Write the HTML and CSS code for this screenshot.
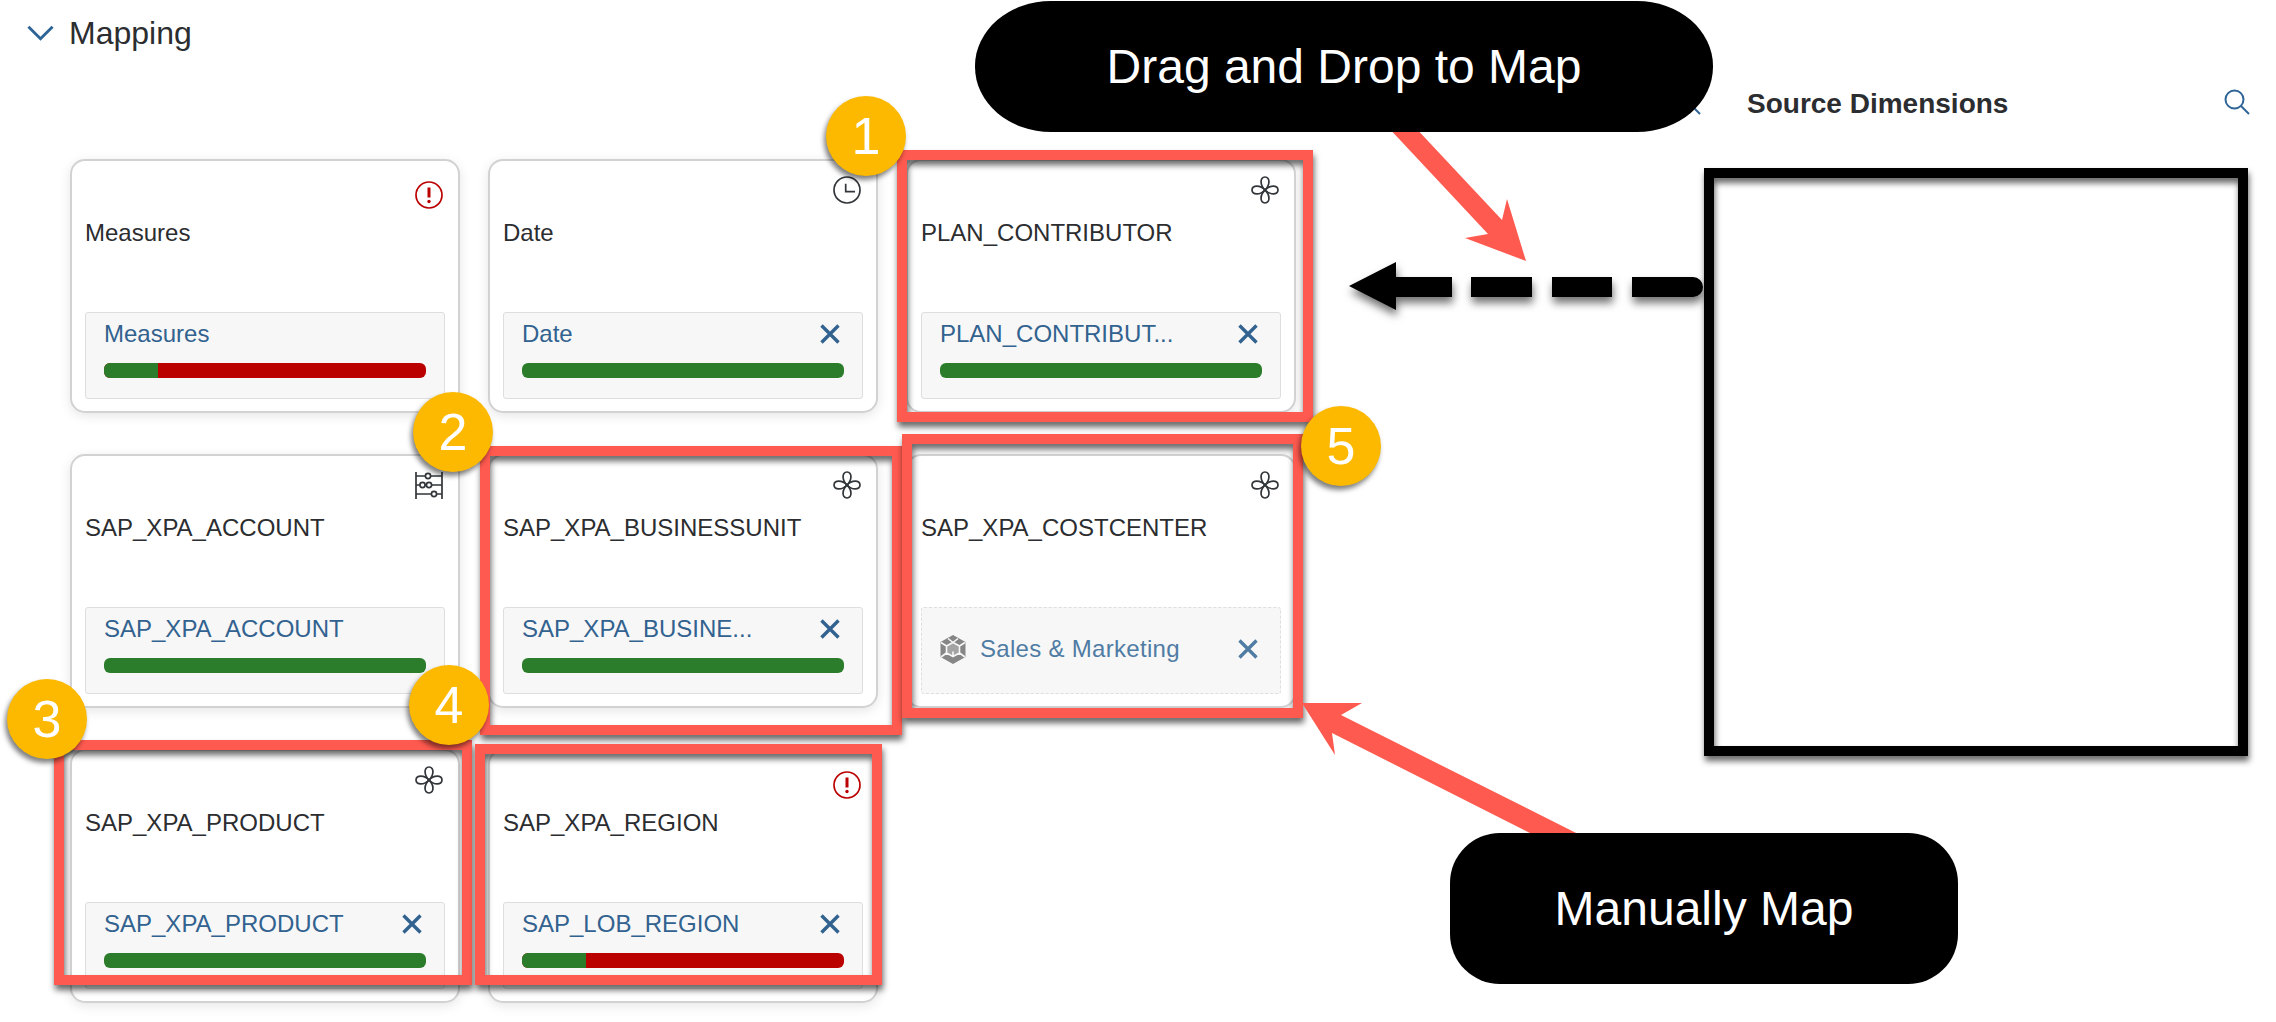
FILE: index.html
```html
<!DOCTYPE html>
<html>
<head>
    <meta charset="UTF-8">
    <title>Mapping</title>
    <link rel="stylesheet" href="styles.css">
</head>
<body>
    <div class="page">
        <!-- Mapping section -->
        <div class="mapping">
            <div class="section-head">
                <svg class="chevron" viewBox="0 0 28 16"><path d="M1.5 1.5 14 14 26.5 1.5" /></svg>
                <span>Mapping</span>
            </div>
            <div class="card-grid">
                <div class="card">
                    <div class="card-icon"><svg viewBox="0 0 28 28" class="ico-error"><circle cx="14" cy="14" r="13" /><path d="M14 6.5V16.5" class="ex" /><circle cx="14" cy="20.5" r="1.7" class="dot" /></svg></div>
                    <div class="card-title">Measures</div>
                    <div class="slot">
                        <div class="slot-row"><span class="slot-label">Measures</span></div>
                        <div class="bar"><div class="bar-green" style="width: 16.8%"></div></div>
                    </div>
                </div>
                <div class="card">
                    <div class="card-icon"><svg viewBox="0 0 28 28" class="ico-line"><circle cx="14" cy="14" r="13" /><path d="M12.7 7.7V15.7H22" /></svg></div>
                    <div class="card-title">Date</div>
                    <div class="slot">
                        <div class="slot-row"><span class="slot-label">Date</span><svg class="close" viewBox="0 0 20 20"><path d="M1.5 1.5 18.5 18.5M18.5 1.5 1.5 18.5" /></svg></div>
                        <div class="bar"><div class="bar-green" style="width: 100%"></div></div>
                    </div>
                </div>
                <div class="card">
                    <div class="card-icon"><svg viewBox="0 0 28 28" class="ico-line"><use href="#flower" /></svg></div>
                    <div class="card-title">PLAN_CONTRIBUTOR</div>
                    <div class="slot">
                        <div class="slot-row"><span class="slot-label">PLAN_CONTRIBUT...</span><svg class="close" viewBox="0 0 20 20"><path d="M1.5 1.5 18.5 18.5M18.5 1.5 1.5 18.5" /></svg></div>
                        <div class="bar"><div class="bar-green" style="width: 100%"></div></div>
                    </div>
                </div>
                <div class="card">
                    <div class="card-icon"><svg viewBox="0 0 28 28" class="ico-line"><path d="M1 1V28M27 1V28M1 5H27M1 14H27M1 23H27" /><circle cx="13" cy="5" r="2.6" class="bead" /><circle cx="7.5" cy="14" r="2.6" class="bead" /><circle cx="14" cy="14" r="2.6" class="bead" /><circle cx="19" cy="23" r="2.6" class="bead" /></svg></div>
                    <div class="card-title">SAP_XPA_ACCOUNT</div>
                    <div class="slot">
                        <div class="slot-row"><span class="slot-label">SAP_XPA_ACCOUNT</span></div>
                        <div class="bar"><div class="bar-green" style="width: 100%"></div></div>
                    </div>
                </div>
                <div class="card">
                    <div class="card-icon"><svg viewBox="0 0 28 28" class="ico-line"><use href="#flower" /></svg></div>
                    <div class="card-title">SAP_XPA_BUSINESSUNIT</div>
                    <div class="slot">
                        <div class="slot-row"><span class="slot-label">SAP_XPA_BUSINE...</span><svg class="close" viewBox="0 0 20 20"><path d="M1.5 1.5 18.5 18.5M18.5 1.5 1.5 18.5" /></svg></div>
                        <div class="bar"><div class="bar-green" style="width: 100%"></div></div>
                    </div>
                </div>
                <div class="card">
                    <div class="card-icon"><svg viewBox="0 0 28 28" class="ico-line"><use href="#flower" /></svg></div>
                    <div class="card-title">SAP_XPA_COSTCENTER</div>
                    <div class="slot slot-manual">
                        <svg class="cube" viewBox="0 0 26 29">
                            <polygon points="13,0 25.5,7 25.5,22 13,29 .5,22 .5,7" />
                            <path d="M13 7.5 19.5 11V18L13 21.5 6.5 18V11ZM13 7.5 8 3.5M13 7.5 18 3.5M6.5 18 1 22M19.5 18 25 22M6.5 11 1 7.5M19.5 11 25 7.5M13 21.5V16.5" />
                        </svg>
                        <span class="manual-label">Sales &amp; Marketing</span>
                        <svg class="close close-light" viewBox="0 0 20 20"><path d="M1.5 1.5 18.5 18.5M18.5 1.5 1.5 18.5" /></svg>
                    </div>
                </div>
                <div class="card">
                    <div class="card-icon"><svg viewBox="0 0 28 28" class="ico-line"><use href="#flower" /></svg></div>
                    <div class="card-title">SAP_XPA_PRODUCT</div>
                    <div class="slot">
                        <div class="slot-row"><span class="slot-label">SAP_XPA_PRODUCT</span><svg class="close" viewBox="0 0 20 20"><path d="M1.5 1.5 18.5 18.5M18.5 1.5 1.5 18.5" /></svg></div>
                        <div class="bar"><div class="bar-green" style="width: 100%"></div></div>
                    </div>
                </div>
                <div class="card">
                    <div class="card-icon"><svg viewBox="0 0 28 28" class="ico-error"><circle cx="14" cy="14" r="13" /><path d="M14 6.5V16.5" class="ex" /><circle cx="14" cy="20.5" r="1.7" class="dot" /></svg></div>
                    <div class="card-title">SAP_XPA_REGION</div>
                    <div class="slot">
                        <div class="slot-row"><span class="slot-label">SAP_LOB_REGION</span><svg class="close" viewBox="0 0 20 20"><path d="M1.5 1.5 18.5 18.5M18.5 1.5 1.5 18.5" /></svg></div>
                        <div class="bar"><div class="bar-green" style="width: 19.8%"></div></div>
                    </div>
                </div>
            </div>
        </div>

        <!-- Source panel header -->
        <div class="source">
            <svg class="search" viewBox="0 0 26 26"><circle cx="10.5" cy="10.5" r="9" /><path d="M17 17 25 25" /></svg>
            <span class="source-title">Source Dimensions</span>
            <svg class="search" viewBox="0 0 26 26"><circle cx="10.5" cy="10.5" r="9" /><path d="M17 17 25 25" /></svg>
        </div>
    </div>

    <!-- Flower icon used on the cards -->
    <svg class="defs" width="0" height="0">
        <defs>
            <g id="flower">
                <path d="M14 14C9 9.5 8.5 1 14 1S19 9.5 14 14Z" />
                <path d="M14 14C18.5 9 27 8.5 27 14S18.5 19 14 14Z" />
                <path d="M14 14C19 18.5 19.5 27 14 27S9 18.5 14 14Z" />
                <path d="M14 14C9.5 19 1 19.5 1 14S9.5 9 14 14Z" />
            </g>
        </defs>
    </svg>

    <!-- Annotations drawn on top of the screenshot -->
    <div class="mark mark-1"></div>
    <div class="mark mark-2"></div>
    <div class="mark mark-3"></div>
    <div class="mark mark-4"></div>
    <div class="mark mark-5"></div>
    <div class="drop-box"></div>

    <svg class="arrows" viewBox="0 0 2276 1022">
        <polygon class="red" points="1386,125 1413,125 1502,220 1507,199 1526,261 1465,238 1488,234" />
        <polygon class="red" points="1590,840 1341,715 1362,703 1302,703 1335,755 1332,733 1544,840" />
        <g class="dashed">
            <polygon points="1349,286 1396,262 1396,277 1452,277 1452,297 1396,297 1396,310" />
            <rect x="1471" y="277" width="61" height="20" />
            <rect x="1552" y="277" width="60" height="20" />
            <path d="M1632 277H1693A10 10 0 0 1 1693 297H1632Z" />
        </g>
    </svg>

    <div class="pill pill-drag">Drag and Drop to Map</div>
    <div class="pill pill-manual">Manually Map</div>

    <div class="badge badge-1">1</div>
    <div class="badge badge-2">2</div>
    <div class="badge badge-3">3</div>
    <div class="badge badge-4">4</div>
    <div class="badge badge-5">5</div>
</body>
</html>
```

FILE: styles.css
```css
/* Page */
body {
    margin: 0;
    background-color: #fff;
    font-family: "Liberation Sans", Arial, sans-serif;
    color: #2b2d30;
    overflow: hidden;
}

.page {
    display: flex;
    width: 2276px;
    height: 1022px;
}

.mapping {
    width: 1675px;
}

.section-head {
    display: flex;
    align-items: center;
    gap: 15px;
    height: 38px;
    padding: 14px 0 0 27px;
    font-size: 32px;
    line-height: 38px;
}

.chevron {
    width: 27px;
    height: 16px;
    fill: none;
    stroke: #2f6497;
    stroke-width: 3;
}

/* Cards */
.card-grid {
    display: grid;
    grid-template-columns: repeat(3, 390px);
    grid-auto-rows: 254px;
    gap: 41px 28px;
    margin: 107px 0 0 70px;
}

.card {
    display: flex;
    flex-direction: column;
    box-sizing: border-box;
    padding: 20px 13px 12px;
    border: 2px solid #d2d2d2;
    border-radius: 15px;
    background-color: #fff;
    box-shadow: 0 3px 12px rgba(0, 0, 0, 0.1);
}

.card-icon {
    display: flex;
    justify-content: flex-end;
    height: 28px;
    padding-right: 2px;
}

.card-icon svg {
    width: 28px;
    height: 28px;
    fill: none;
}

.ico-error {
    stroke: #bb0000;
    stroke-width: 1.7;
}

.ico-error .ex {
    stroke-width: 3;
}

.ico-error .dot {
    fill: #bb0000;
    stroke: none;
}

/* These icons sit a little higher than the error icon */
.ico-line {
    margin-top: -5px;
    stroke: #32363a;
    stroke-width: 1.7;
}

.bead {
    fill: #fff;
}

.card-title {
    margin-top: 9px;
    font-size: 24px;
    line-height: 30px;
}

/* Mapped slot at the bottom of a card */
.slot {
    box-sizing: border-box;
    height: 87px;
    margin-top: auto;
    padding: 6px 18px 0;
    border: 1px solid #dedede;
    border-radius: 3px;
    background-color: #f7f7f7;
}

.slot-row {
    display: flex;
    align-items: center;
    justify-content: space-between;
    height: 30px;
}

.slot-label {
    font-size: 24px;
    color: #32628f;
}

.close {
    width: 20px;
    height: 20px;
    margin-right: 4px;
    fill: none;
    stroke: #32628f;
    stroke-width: 3.4;
}

.close-light {
    margin-left: auto;
    stroke: #507ca4;
}

.bar {
    height: 15px;
    margin-top: 14px;
    border-radius: 6px;
    background-color: #bb0000;
    overflow: hidden;
}

.bar-green {
    height: 100%;
    background-color: #2b7d2b;
}

.slot-manual {
    display: flex;
    align-items: center;
    gap: 14px;
    padding-top: 0;
    padding-bottom: 3px;
    border-style: dashed;
}

.cube {
    width: 26px;
    height: 29px;
    fill: #868686;
    stroke: none;
}

.cube path {
    fill: #a4a4a4;
    stroke: #f7f7f7;
    stroke-width: 1.6;
}

.manual-label {
    font-size: 24px;
    letter-spacing: 0.3px;
    color: #507ca4;
}

/* Source panel */
.source {
    display: flex;
    align-items: flex-start;
    flex: 1;
    gap: 46px;
    padding: 89px 26px 0 0;
}

.source-title {
    flex: 1;
    font-size: 28px;
    font-weight: bold;
    line-height: 30px;
}

.search {
    width: 26px;
    height: 26px;
    fill: none;
    stroke: #2f6497;
    stroke-width: 2;
}

.defs {
    position: absolute;
}

/* Annotations */
.mark,
.drop-box {
    position: absolute;
    box-sizing: border-box;
    border: 10px solid #ff5a4f;
    filter: drop-shadow(1px 5px 3px rgba(0, 0, 0, 0.6));
}

.mark-1 { left: 897px; top: 150px; width: 416px; height: 272px; }
.mark-2 { left: 480px; top: 446px; width: 422px; height: 289px; }
.mark-3 { left: 54px; top: 740px; width: 418px; height: 245px; }
.mark-4 { left: 475px; top: 744px; width: 407px; height: 241px; }
.mark-5 { left: 902px; top: 434px; width: 401px; height: 284px; }

.drop-box {
    left: 1704px;
    top: 168px;
    width: 544px;
    height: 588px;
    border-color: #000;
}

.arrows {
    position: absolute;
    left: 0;
    top: 0;
    width: 2276px;
    height: 1022px;
}

.red {
    fill: #ff5a4f;
}

.dashed {
    fill: #000;
    filter: drop-shadow(1px 6px 4px rgba(0, 0, 0, 0.55));
}

.pill {
    position: absolute;
    display: flex;
    align-items: center;
    justify-content: center;
    background-color: #000;
    color: #fff;
    font-size: 48px;
}

.pill-drag {
    left: 975px;
    top: 1px;
    width: 738px;
    height: 131px;
    border-radius: 76px / 65px;
}

.pill-manual {
    left: 1450px;
    top: 833px;
    width: 508px;
    height: 151px;
    border-radius: 50px;
}

.badge {
    position: absolute;
    display: flex;
    align-items: center;
    justify-content: center;
    width: 80px;
    height: 80px;
    border-radius: 50%;
    background-color: #fcb900;
    color: #fff;
    font-size: 52px;
    box-shadow: -2px 4px 5px rgba(0, 0, 0, 0.5);
}

.badge-1 { left: 826px; top: 96px; }
.badge-2 { left: 413px; top: 392px; }
.badge-3 { left: 7px; top: 679px; }
.badge-4 { left: 409px; top: 665px; }
.badge-5 { left: 1301px; top: 406px; }
```
